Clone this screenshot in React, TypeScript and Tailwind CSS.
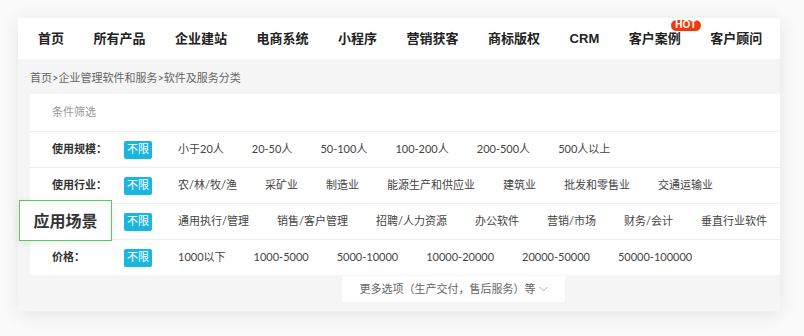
const navItems = ['首页', '所有产品', '企业建站', '电商系统', '小程序', '营销获客', '商标版权', 'CRM', '客户案例', '客户顾问'];

const filterRows = [
    {label: '使用规模：', options: ['小于20人', '20-50人', '50-100人', '100-200人', '200-500人', '500人以上']},
    {label: '使用行业：', options: ['农/林/牧/渔', '采矿业', '制造业', '能源生产和供应业', '建筑业', '批发和零售业', '交通运输业']},
    // label of this row is shown by the highlighted box below
    {label: '', options: ['通用执行/管理', '销售/客户管理', '招聘/人力资源', '办公软件', '营销/市场', '财务/会计', '垂直行业软件']},
    {label: '价格：', options: ['1000以下', '1000-5000', '5000-10000', '10000-20000', '20000-50000', '50000-100000']},
];

function FilterRow({label, options}: { label: string, options: string[] }) {
    return (
        <div className="flex h-[36px] items-center border-t border-[#eeeeee] pl-[22px]">
            <div className="w-[72px] text-[11px] font-bold text-[#333]">{label}</div>
            <span className="flex h-[18px] items-center rounded-[2px] bg-[#1bb6de] px-[3px] text-[11px] text-white">不限</span>
            <div className="ml-[26px] flex gap-[28px] text-[11px] text-[#444]">
                {options.map((o) => (
                    <span key={o} className="whitespace-nowrap">{o}</span>
                ))}
            </div>
        </div>
    );
}

export default function App() {
    return (
        <div className="h-[336px] w-[804px] bg-[#fafafa] pl-[18px] pt-[18px] font-['Lato','Noto_Sans_CJK_SC',sans-serif]">
            <div className="relative w-[762px] bg-[#f5f5f5] pb-[9px] shadow-[0_3px_18px_rgba(0,0,0,0.09)]">
                <nav className="flex h-[41px] items-center gap-[29.5px] bg-white pl-[20px] font-['Liberation_Sans','Noto_Sans_CJK_SC',sans-serif]">
                    {navItems.map((item) => (
                        <div key={item} className="relative whitespace-nowrap text-[13px] font-bold text-[#222]">
                            {item}
                            {item === '客户案例' && (
                                <span className="absolute left-[42px] top-[-9px] flex h-[11px] w-[30px] items-center justify-center rounded-full bg-[#ee3b0c] text-[10px] font-bold leading-none text-white">
                                    HOT
                                </span>
                            )}
                        </div>
                    ))}
                </nav>

                <div className="flex h-[35px] items-center pl-[12px] pt-[3px] text-[11px] text-[#666]">
                    首页&gt;企业管理软件和服务&gt;软件及服务分类
                </div>

                <div className="ml-[12px] bg-white">
                    <div className="flex h-[37px] items-center pl-[22px] text-[11px] text-[#999]">条件筛选</div>
                    {filterRows.map((r, i) => (
                        <FilterRow key={i} label={r.label} options={r.options}/>
                    ))}
                </div>

                <div className="mt-[1px] pl-[324px]">
                    <div className="flex h-[26px] w-[223px] items-center justify-center gap-[3px] bg-white text-[11px] text-[#666]">
                        更多选项（生产交付，售后服务）等
                        <svg width="9" height="6" viewBox="0 0 9 6" fill="none">
                            <path d="M0.5 0.8 L4.5 4.8 L8.5 0.8" stroke="#aaa" strokeWidth="1"/>
                        </svg>
                    </div>
                </div>

                {/* highlighted label overlay */}
                <div className="absolute left-[1px] top-[182px] flex h-[41px] w-[93px] items-center justify-center border border-[#5cc95c] bg-white text-[16px] font-bold text-[#333] shadow-[0_2px_8px_rgba(0,0,0,0.08)]">
                    应用场景
                </div>
            </div>
        </div>
    );
}
